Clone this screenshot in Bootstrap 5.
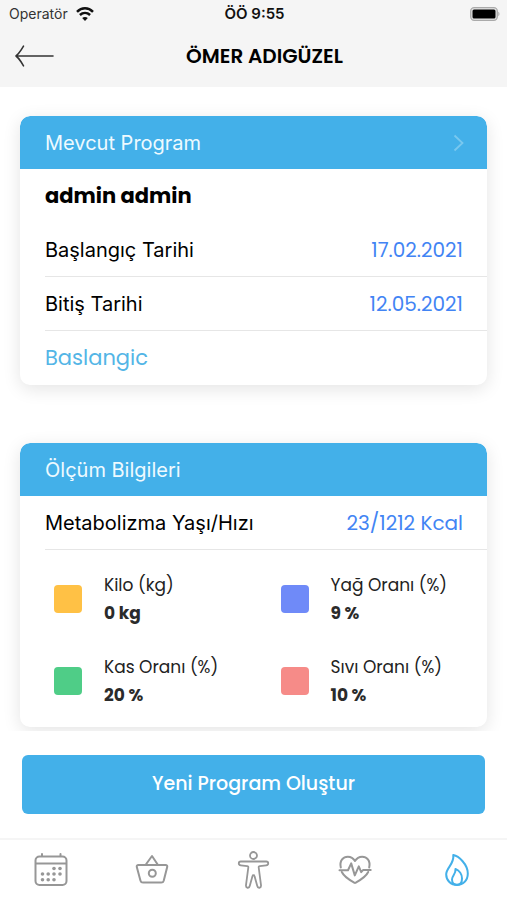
<!DOCTYPE html>
<html lang="tr">
<head>
<meta charset="utf-8">
<meta name="viewport" content="width=device-width, initial-scale=1">
<title>Ömer Adıgüzel</title>
<link href="https://cdn.jsdelivr.net/npm/bootstrap@5.3.0/dist/css/bootstrap.min.css" rel="stylesheet">
<style>
  :root { --brand: #43b0e9; --value: #4284f4; }
  body { font-family: Poppins, Inter, "Noto Sans", sans-serif; color: #000; background: #fff; }
  .system-text { font-family: Inter, "Noto Sans", sans-serif; }
  .app-head { background: #f5f5f5; }
  .status-bar { height: 27px; line-height: 27px; display: grid; grid-template-columns: 1fr auto 1fr; padding: 0 7px 0 9px; }
  .operator { color: #333; font-size: 14px; }
  .clock { color: #111; font-size: 15px; }
  .title-bar { height: 60px; padding: 0 32px 2px 14px; }
  .title-bar h1 { font-size: 20px; line-height: 28px; }
  .scroll-area { padding: 29px 20px 4px; gap: 58px; overflow: hidden; }
  .panel { --bs-card-border-width: 0; --bs-card-border-radius: 10px; --bs-card-inner-border-radius: 10px; box-shadow: 0 4px 18px rgba(0,0,0,.11); overflow: hidden; }
  .panel-head { background: var(--brand); color: #eefaff; min-height: 53px; padding: 0 20px 0 25px; border-radius: 10px 10px 0 0; }
  .panel-head h2, .line-row { font-size: 20px; line-height: 28px; font-weight: 400; }
  .panel-head svg { color: #79c8ef; }
  .line-row { min-height: 54px; margin-left: 25px; padding-right: 24px; }
  .line-row.ruled { border-bottom: 1px solid #e6e6e6; }
  .person, .link-brand { font-size: 21px; line-height: 28px; }
  .val { color: var(--value); }
  .link-brand { color: #53b5e6; }
  .stats { display: grid; grid-template-columns: 1fr 1fr; gap: 26px 20px; padding: 21px 0 18px 34px; }
  .stat { gap: 22px; }
  .stats dl { font-size: 17px; line-height: 28px; }
  .stats dt { font-weight: 400; color: #222; }
  .stats dd { font-weight: 700; color: #2b2b2b; }
  .swatch { width: 28px; height: 28px; border-radius: 4px; }
  .yellow { background: #ffc145; }
  .indigo { background: #6f8af8; }
  .green { background: #4fcd87; }
  .coral { background: #f68b88; }
  .action { padding: 24px 22px; }
  .btn-create { --bs-btn-bg: var(--brand); --bs-btn-color: #fff; --bs-btn-hover-bg: #36a3dd; --bs-btn-hover-color: #fff; --bs-btn-border-width: 0; --bs-btn-border-radius: 6px; --bs-btn-font-size: 19px; --bs-btn-font-weight: 500; min-height: 59px; }
  .tab-bar { border-top: 2px solid #f5f5f5; height: 62px; }
  .tab-bar a { color: #979797; }
  .tab-bar a.current { color: var(--brand); }
</style>
<script src="https://cdn.jsdelivr.net/npm/bootstrap@5.3.0/dist/js/bootstrap.bundle.min.js"></script>
</head>
<body>
<div class="d-flex flex-column min-vh-100">
  <header class="app-head">
    <div class="status-bar system-text align-items-center">
      <div class="operator d-flex align-items-center gap-2">
        <span>Operatör</span>
        <svg width="18" height="14" viewBox="0 0 18 14" fill="none" stroke="#111" stroke-width="2.5" aria-hidden="true"><path d="M1 4.8C5.6.2 12.4.2 17 4.8"/><path d="M3.900 8c3-2.800 7.200-2.800 10.200 0"/><path d="M9 14 6.200 11c1.600-1.400 4-1.400 5.600 0z" fill="#111" stroke="none"/></svg>
      </div>
      <div class="clock fw-semibold">ÖÖ 9:55</div>
      <svg class="ms-auto" width="30" height="14" viewBox="0 0 30 14" aria-hidden="true"><rect x=".7" y=".7" width="26.600" height="12.600" rx="3.500" fill="#e4e4e4" stroke="#aaa" stroke-width="1.300"/><rect x="2.500" y="2.500" width="23" height="9" rx="1.500" fill="#000"/><path d="M28.300 4.800c1.500.5 1.500 3.900 0 4.400z" fill="#aaa"/></svg>
    </div>
    <div class="title-bar d-flex align-items-center">
      <a href="#" class="d-inline-flex" aria-label="Geri">
        <svg width="40" height="22" viewBox="0 0 40 22" fill="none" stroke="#333" stroke-width="1.600" stroke-linecap="round" stroke-linejoin="round"><path d="M39 11H2M9.500 1.200 7 5.200C5.500 7.500 4 9.500 2 11c2 1.500 3.500 3.500 5 5.800l2.500 4"/></svg>
      </a>
      <h1 class="fw-semibold mb-0 flex-grow-1 text-center">ÖMER ADIGÜZEL</h1>
    </div>
  </header>

  <main class="flex-grow-1 d-flex flex-column">
    <div class="scroll-area d-flex flex-column">
      <section class="card panel">
        <div class="panel-head system-text d-flex align-items-center justify-content-between">
          <h2 class="mb-0">Mevcut Program</h2>
          <a href="#" class="d-inline-flex" aria-label="Programı aç"><svg width="14" height="18" viewBox="0 0 14 18" fill="none" stroke="currentColor" stroke-width="1.800"><path d="m1.500 1.500 8 7.500-8 7.500"/></svg></a>
        </div>
        <div class="line-row d-flex align-items-center"><strong class="person">admin admin</strong></div>
        <div class="line-row ruled d-flex align-items-center justify-content-between"><span class="system-text">Başlangıç Tarihi</span><span class="val">17.02.2021</span></div>
        <div class="line-row ruled d-flex align-items-center justify-content-between"><span class="system-text">Bitiş Tarihi</span><span class="val">12.05.2021</span></div>
        <div class="line-row d-flex align-items-center"><a href="#" class="link-brand text-decoration-none">Baslangic</a></div>
      </section>

      <section class="card panel">
        <div class="panel-head system-text d-flex align-items-center"><h2 class="mb-0">Ölçüm Bilgileri</h2></div>
        <div class="line-row ruled d-flex align-items-center justify-content-between"><span class="system-text">Metabolizma Yaşı/Hızı</span><span class="val">23/1212 Kcal</span></div>
        <div class="stats">
          <div class="stat d-flex align-items-center"><span class="swatch yellow"></span><dl class="mb-0"><dt>Kilo (kg)</dt><dd class="mb-0">0 kg</dd></dl></div>
          <div class="stat d-flex align-items-center"><span class="swatch indigo"></span><dl class="mb-0"><dt>Yağ Oranı (%)</dt><dd class="mb-0">9 %</dd></dl></div>
          <div class="stat d-flex align-items-center"><span class="swatch green"></span><dl class="mb-0"><dt>Kas Oranı (%)</dt><dd class="mb-0">20 %</dd></dl></div>
          <div class="stat d-flex align-items-center"><span class="swatch coral"></span><dl class="mb-0"><dt>Sıvı Oranı (%)</dt><dd class="mb-0">10 %</dd></dl></div>
        </div>
      </section>
    </div>
    <div class="action"><button type="button" class="btn btn-create w-100">Yeni Program Oluştur</button></div>
  </main>

  <nav class="tab-bar row row-cols-5 g-0 align-items-center text-center" aria-label="Ana menü">
    <a class="col" href="#" aria-label="Takvim"><svg width="34" height="34" viewBox="0 0 34 34" fill="none" stroke="currentColor" stroke-width="2" stroke-linecap="round"><rect x="1.500" y="3.500" width="31" height="28.500" rx="4"/><path d="M2 10.500h30M8 1v2M26.500 1v2"/><g fill="currentColor" stroke="none"><circle cx="20" cy="15.500" r="1.800"/><circle cx="26" cy="15.500" r="1.800"/><circle cx="8.500" cy="21" r="1.800"/><circle cx="14.200" cy="21" r="1.800"/><circle cx="20" cy="21" r="1.800"/><circle cx="26" cy="21" r="1.800"/><circle cx="8.500" cy="26.800" r="1.800"/><circle cx="14.200" cy="26.800" r="1.800"/><circle cx="20" cy="26.800" r="1.800"/></g></svg></a>
    <a class="col" href="#" aria-label="Sepet"><svg width="34" height="34" viewBox="0 0 34 34" fill="none" stroke="currentColor" stroke-width="2" stroke-linecap="round" stroke-linejoin="round"><path d="M3.500 12h27c1.500 0 2 .8 1.700 2l-3.500 13.700c-.4 1.400-1.200 1.900-2.500 1.900H8c-1.300 0-2.100-.5-2.500-1.900L1.800 14c-.3-1.200.2-2 1.700-2zM10.500 12l6.500-9 6 9"/><circle cx="17.300" cy="20.300" r="3.500"/></svg></a>
    <a class="col" href="#" aria-label="Vücut"><svg width="34" height="38" viewBox="0 0 34 38" fill="none" stroke="currentColor" stroke-width="1.800" stroke-linejoin="round"><circle cx="17.500" cy="4.500" r="3.500"/><path d="M4.800 10.500h25.400c2.700 0 2.700 3.600 0 3.900l-6.400.7c-.9.100-1.200.6-1.100 1.400l2.300 17.600c.4 3.200-3.200 3.600-3.800.7L18.500 25c-.2-1-1.800-1-2 0l-2.700 9.800c-.6 2.900-4.200 2.500-3.800-.7l2.300-17.600c.1-.8-.2-1.300-1.100-1.400l-6.400-.7c-2.700-.3-2.700-3.900 0-3.900z"/></svg></a>
    <a class="col" href="#" aria-label="Sağlık"><svg width="34" height="34" viewBox="0 0 34 34" fill="none" stroke="currentColor" stroke-width="2" stroke-linecap="round" stroke-linejoin="round"><path d="M2.800 14.500C1.200 7.500 5.500 3.700 9.800 3.700c3.200 0 5.700 1.700 7.200 4.300 1.500-2.600 4-4.300 7.200-4.300C28.500 3.700 32.800 7.500 31.200 14.500M3.800 19C6.500 24.500 12 27.200 17 30c5-2.800 10.500-5.500 13.200-11"/><path d="M1.500 17.200H10l3.200-6.800 3.600 12 4-9 2.400 5.700 1.800-2h7.700"/></svg></a>
    <a class="col current" href="#" aria-label="Kalori" aria-current="page"><svg width="34" height="34" viewBox="0 0 34 34" fill="none" stroke="currentColor" stroke-width="2" stroke-linejoin="round"><path d="M14.300 2c5.500 1 14.500 9.500 14.500 18.500C28.800 27.500 24 32 18 32S7.200 27.500 7.200 21.500C7.200 14.500 15.300 11.500 14.300 2z"/><path d="M16.500 16c4 1.500 6.500 5.500 6.500 9.500 0 4-2 6.300-5 6.300s-5-2.300-5-5.300c0-4 4-5 3.500-10.500z"/></svg></a>
  </nav>
</div>
</body>
</html>
